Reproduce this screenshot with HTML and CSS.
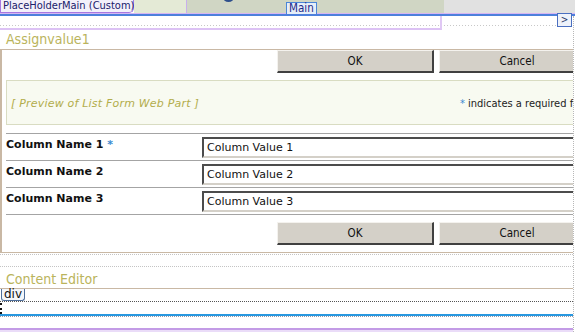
FILE: index.html
```html
<!DOCTYPE html>
<html>
<head>
  <title>Assignvalue1 - Design</title>
  <link rel="stylesheet" href="styles.css">
</head>
<body>
  <div id="designer">
    <div class="topbar">
      <div class="ph-tag">PlaceHolderMain (Custom)</div>
      <div class="zone-light"></div>
      <div class="zone-mid">
        <span class="zone-dot"></span>
        <span class="main-tag">Main</span>
      </div>
      <div class="zone-grey"></div>
    </div>
    <div class="rule-lav"></div>
    <div class="rule-blue">
      <span class="scroll-btn">&gt;</span>
    </div>

    <div class="page">
      <div class="zone-strip"><div class="zone-box"></div></div>

      <div class="wp-title">Assignvalue1</div>
      <div class="webpart">
        <div class="toolbar">
          <span class="btn">OK</span>
          <span class="btn">Cancel</span>
        </div>
        <div class="preview">
          <span class="preview-text">[ Preview of List Form Web Part ]</span>
          <span class="req"><span class="star">*</span> indicates a required field</span>
        </div>
        <div class="form">
          <div class="form-row">
            <div class="label">Column Name 1 <span class="star">*</span></div>
            <div class="field">Column Value 1</div>
          </div>
          <div class="form-row">
            <div class="label">Column Name 2</div>
            <div class="field">Column Value 2</div>
          </div>
          <div class="form-row">
            <div class="label">Column Name 3</div>
            <div class="field">Column Value 3</div>
          </div>
        </div>
        <div class="toolbar bottom">
          <span class="btn">OK</span>
          <span class="btn">Cancel</span>
        </div>
      </div>

      <div class="zone-gap"></div>
      <div class="wp-title ce">Content Editor</div>
      <div class="ce-body">
        <span class="div-tag">div</span>
      </div>
      <div class="ce-inner"></div>
      <div class="rule-cyan"></div>
      <div class="ce-foot"></div>
      <div class="rule-purple"></div>
    </div>
  </div>
</body>
</html>
```

FILE: styles.css
```css
body {
  margin: 0;
  background: #fff;
  font-family: "DejaVu Sans", Verdana, sans-serif;
  overflow: hidden;
}
#designer {
  width: 575px;
  height: 333px;
  overflow: hidden;
}

/* top strip of the designer */
.topbar {
  display: flex;
  height: 13px;
}
.ph-tag {
  width: 130px;
  padding-left: 2px;
  border: 1px solid #a878e0;
  border-top: none;
  border-radius: 0 0 5px 0;
  background: #f3f0fa;
  color: #20206a;
  font-family: "DejaVu Sans Condensed", "DejaVu Sans", sans-serif;
  font-stretch: condensed;
  font-size: 11px;
  line-height: 12px;
  white-space: nowrap;
}
.zone-light {
  width: 52px;
  background: #e4ead6;
  border-right: 1px solid #c8b0ec;
}
.zone-mid {
  position: relative;
  width: 257px;
  background: #d0d6c4;
}
.zone-dot {
  position: absolute;
  left: 36px;
  top: -7px;
  width: 11px;
  height: 9px;
  border-radius: 50%;
  background: #2e4f8c;
}
.main-tag {
  position: absolute;
  left: 99px;
  top: 2px;
  padding: 0 2px;
  border: 1px solid #4a86d8;
  border-bottom: none;
  background: #e6eef8;
  color: #1c2a8a;
  font-family: "DejaVu Sans Condensed", "DejaVu Sans", sans-serif;
  font-stretch: condensed;
  font-size: 11.5px;
  line-height: 11px;
}
.zone-grey {
  flex: 1;
  background: #e1e1e1;
}
.rule-lav {
  height: 1px;
  background: #d7b6f2;
}
.rule-blue {
  position: relative;
  height: 2px;
  background: #4d80dc;
}
.scroll-btn {
  position: absolute;
  left: 557px;
  top: -1px;
  width: 13px;
  height: 12px;
  border: 1px solid #4a6fc0;
  background: #eef2fa;
  color: #2a3a6a;
  font-family: "DejaVu Sans Condensed", "DejaVu Sans", sans-serif;
  font-size: 10px;
  line-height: 12px;
  text-align: center;
}

/* page body */
.page {
  width: 573px;
  border-right: 1px dotted #b8b8b8;
  overflow: hidden;
}
.zone-strip {
  height: 14px;
  background: repeating-linear-gradient(90deg, #c8c8c8 0 1px, transparent 1px 3px) no-repeat 0 9px / 100% 1px;
}
.zone-box {
  width: 440px;
  height: 12px;
  border-right: 2px solid #e0c8f4;
  border-bottom: 2px solid #dcc2f4;
}
.wp-title {
  height: 19px;
  padding-left: 6px;
  color: #bab45c;
  font-family: "DejaVu Sans Condensed", "DejaVu Sans", sans-serif;
  font-stretch: condensed;
  font-size: 14px;
  line-height: 19px;
}
.webpart {
  width: 604px;
  padding-bottom: 7px;
  border-top: 1px solid #c9b8a4;
  border-left: 2px solid #c9b8a4;
  border-bottom: 1px solid #c9b8a4;
}
.toolbar {
  display: flex;
  justify-content: flex-end;
  gap: 5px;
  padding-right: 10px;
}
.toolbar.bottom {
  margin-top: 7px;
}
.btn {
  box-sizing: border-box;
  width: 157px;
  height: 23px;
  border: 1px solid #f4f2ee;
  border-right: 2px solid #404040;
  border-bottom: 2px solid #404040;
  background: #d4d0c8;
  color: #111;
  font-family: "DejaVu Sans Condensed", "DejaVu Sans", sans-serif;
  font-stretch: condensed;
  font-size: 11.5px;
  line-height: 20px;
  text-align: center;
}
.preview {
  display: flex;
  justify-content: space-between;
  align-items: center;
  box-sizing: border-box;
  height: 45px;
  margin: 7px 0 0 4px;
  padding: 2px 14px 0 4px;
  border: 1px solid #d9dcc2;
  background: #f8faf1;
  font-size: 11px;
}
.preview-text {
  color: #b3ad4c;
  font-style: italic;
  letter-spacing: 0.2px;
}
.req {
  color: #222;
  font-family: "DejaVu Sans Condensed", "DejaVu Sans", sans-serif;
  font-stretch: condensed;
  font-size: 11px;
  white-space: nowrap;
}
.star {
  color: #3a8ad0;
}

/* form rows */
.form {
  width: 594px;
  margin: 8px 0 0 4px;
  border-top: 1px solid #a4a4a4;
}
.form-row {
  display: grid;
  grid-template-columns: 196px 1fr;
  height: 26px;
  border-bottom: 1px solid #a4a4a4;
}
.label {
  padding-top: 4px;
  color: #111;
  font-size: 11px;
  font-weight: bold;
  line-height: 13px;
}
.field {
  box-sizing: border-box;
  height: 21px;
  margin-top: 3px;
  padding-left: 3px;
  border-width: 2px 1px 2px 2px;
  border-style: solid;
  border-color: #4c4c4c #d4d0c8 #d4d0c8 #4c4c4c;
  background: #fff;
  color: #111;
  font-size: 11px;
  line-height: 17px;
}

/* content editor zone */
.zone-gap {
  height: 11px;
  margin-top: 1px;
  border-top: 1px dotted #c4c4c4;
  border-bottom: 1px dotted #c4c4c4;
}
.wp-title.ce {
  height: 21px;
  line-height: 24px;
}
.ce-body {
  height: 12px;
  border-top: 1px solid #c9b8a4;
  border-bottom: 1px dotted #555;
}
.div-tag {
  display: inline-block;
  vertical-align: top;
  margin-left: 1px;
  padding: 0 2px;
  border: 1px solid #4e6e9a;
  border-top: none;
  border-radius: 0 0 3px 3px;
  background: #f4f6fa;
  color: #111;
  font-size: 12px;
  line-height: 11px;
}
.ce-inner {
  height: 11px;
  margin-top: 1px;
  border-left: 2px dotted #111;
}
.rule-cyan {
  height: 2px;
  background: #2898e0;
}
.ce-foot {
  height: 11px;
  border-top: 1px dotted #9a9aa8;
}
.rule-purple {
  height: 2px;
  background: #c39be6;
  border-bottom: 2px solid #eadcf8;
}
```
